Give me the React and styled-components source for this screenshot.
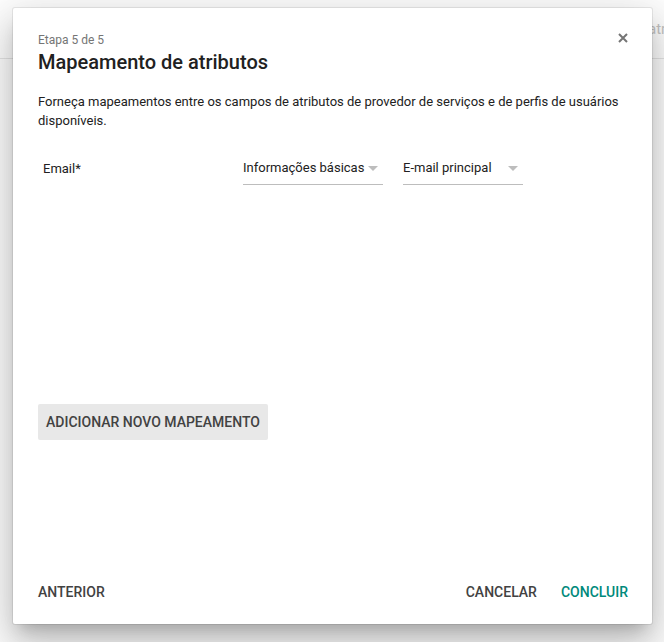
import styled, { createGlobalStyle } from 'styled-components'

const Global = createGlobalStyle`
  html, body {
    margin: 0;
    padding: 0;
    background: #fff;
    font-family: Roboto, "Liberation Sans", Arial, sans-serif;
  }
`

const Page = styled.div`
  position: relative;
  width: 664px;
  height: 642px;
  overflow: hidden;
  background: #fff;
`

const Header = styled.div`
  height: 58px;
  border-bottom: 1px solid #e6e6e6;
  display: flex;
  align-items: center;
  padding-left: 648px;
  white-space: nowrap;
  color: #c4c4c4;
  font-size: 15px;
`

const Dialog = styled.div`
  position: absolute;
  left: 13px;
  top: 8px;
  width: 639px;
  height: 616px;
  box-sizing: border-box;
  background: #fff;
  border-radius: 2px;
  box-shadow: 0 0 0 1px rgba(0,0,0,0.08), 0 11px 15px -7px rgba(0,0,0,.2), 0 24px 38px 3px rgba(0,0,0,.14), 0 9px 46px 8px rgba(0,0,0,.12);
  display: flex;
  flex-direction: column;
  padding: 24px 24px 14px 25px;
`

const Top = styled.div`
  display: flex;
  justify-content: space-between;
  align-items: flex-start;
`

const Step = styled.div`
  font-size: 12px;
  line-height: 16px;
  color: #757575;
`

const Title = styled.h1`
  margin: 1px 0 0;
  font-size: 20px;
  line-height: 26px;
  font-weight: 500;
  color: #212121;
`

const Close = styled.button`
  border: none;
  background: none;
  padding: 0;
  margin: 1px 0 0 0;
  width: 10px;
  height: 10px;
  display: flex;
  align-items: center;
  justify-content: center;
  cursor: pointer;
`

const Desc = styled.p`
  margin: 17px 0 0;
  font-size: 13px;
  line-height: 19px;
  color: #212121;
`

const Row = styled.div`
  display: flex;
  align-items: flex-start;
  margin-top: 26px;
`

const Label = styled.div`
  width: 200px;
  padding-left: 5px;
  font-size: 13px;
  line-height: 20px;
  padding-top: 3px;
  color: #212121;
`

const Select = styled.div`
  width: ${p => p.w}px;
  margin-right: 20px;
  height: 29px;
  box-sizing: border-box;
  border-bottom: 1px solid #bdbdbd;
  display: flex;
  align-items: flex-start;
  justify-content: space-between;
  padding-top: 2px;
  font-size: 13px;
  line-height: 20px;
  color: #212121;
`

const Caret = styled.span`
  width: 0;
  height: 0;
  margin: 8px 5px 0 0;
  border-left: 5px solid transparent;
  border-right: 5px solid transparent;
  border-top: 5px solid #bdbdbd;
`

const Spacer = styled.div`
  flex: 1;
`

const AddButton = styled.button`
  align-self: flex-start;
  border: none;
  border-radius: 2px;
  background: #e8e8e8;
  height: 36px;
  padding: 0 8px;
  font-family: inherit;
  font-size: 14px;
  font-weight: 500;
  color: #424242;
  cursor: pointer;
  margin-bottom: 134px;
`

const Footer = styled.div`
  display: flex;
  align-items: center;
`

const FlatButton = styled.button`
  border: none;
  background: none;
  height: 36px;
  padding: 0;
  margin-left: ${p => p.gap || 0}px;
  font-family: inherit;
  font-size: 14px;
  font-weight: 500;
  color: ${p => p.primary ? '#00897b' : '#424242'};
  cursor: pointer;
`

const App = () => {
    return (
        <Page>
            <Global />
            <Header>atributos</Header>
            <Dialog>
                <Top>
                    <div>
                        <Step>Etapa 5 de 5</Step>
                        <Title>Mapeamento de atributos</Title>
                    </div>
                    <Close aria-label="Fechar">
                        <svg width="10" height="10" viewBox="0 0 10 10">
                            <path d="M1 1 L9 9 M9 1 L1 9" stroke="#757575" strokeWidth="2" />
                        </svg>
                    </Close>
                </Top>
                <Desc>Forneça mapeamentos entre os campos de atributos de provedor de serviços e de perfis de usuários disponíveis.</Desc>
                <Row>
                    <Label>Email*</Label>
                    <Select w={140}>Informações básicas<Caret /></Select>
                    <Select w={120}>E-mail principal<Caret /></Select>
                </Row>
                <Spacer />
                <AddButton>ADICIONAR NOVO MAPEAMENTO</AddButton>
                <Footer>
                    <FlatButton>ANTERIOR</FlatButton>
                    <Spacer />
                    <FlatButton>CANCELAR</FlatButton>
                    <FlatButton primary gap={24}>CONCLUIR</FlatButton>
                </Footer>
            </Dialog>
        </Page>
    )
}

export default App
